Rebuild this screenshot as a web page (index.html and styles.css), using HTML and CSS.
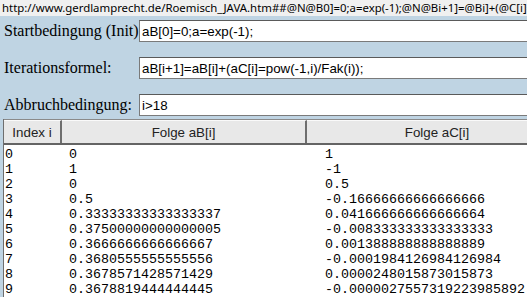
FILE: index.html
```html
<!DOCTYPE html>
<html lang="de">
<head>
    <meta charset="UTF-8">
    <title>Roemisch JAVA</title>
    <link rel="stylesheet" href="styles.css">
</head>
<body>
    <div class="urlbar">http://www.gerdlamprecht.de/Roemisch_JAVA.htm##@N@B0]=0;a=exp(-1);@N@Bi+1]=@Bi]+(@C[i]=pow(-1,i)/Fak(i));@N@Ci]</div>

    <div class="form">
        <div class="row">
            <label class="lbl">Startbedingung (Init)</label>
            <input class="field" type="text" value="aB[0]=0;a=exp(-1);">
        </div>
        <div class="row">
            <label class="lbl">Iterationsformel:</label>
            <input class="field" type="text" value="aB[i+1]=aB[i]+(aC[i]=pow(-1,i)/Fak(i));">
        </div>
        <div class="row">
            <label class="lbl">Abbruchbedingung:</label>
            <input class="field" type="text" value="i&gt;18">
        </div>
    </div>

    <div class="sheet">
        <div class="head">
            <div class="th idx">Index i</div>
            <div class="th col-b">Folge aB[i]</div>
            <div class="th col-c">Folge aC[i]</div>
        </div>
        <pre class="out">0       0                               1
1       1                               -1
2       0                               0.5
3       0.5                             -0.16666666666666666
4       0.33333333333333337             0.041666666666666664
5       0.37500000000000005             -0.008333333333333333
6       0.3666666666666667              0.001388888888888889
7       0.3680555555555556              -0.0001984126984126984
8       0.3678571428571429              0.0000248015873015873
9       0.3678819444444445              -0.0000027557319223985892</pre>
    </div>
</body>
</html>
```

FILE: styles.css
```css
* {
    margin: 0;
    padding: 0;
    box-sizing: border-box;
}

html, body {
    overflow: hidden;
}

body {
    width: 527px;
    height: 297px;
    background: #bfd4e3;
    font-family: "Liberation Serif", serif;
}

.urlbar {
    height: 16px;
    padding-left: 2px;
    background: #f0f0f0;
    color: #000;
    font-family: "Noto Sans", sans-serif;
    font-size: 11.4px;
    line-height: 15px;
    white-space: nowrap;
    overflow: hidden;
}

.form {
    display: flex;
    flex-direction: column;
    gap: 15px;
    padding: 4px 0 0 4px;
    overflow: hidden;
}

.row {
    display: flex;
    align-items: center;
    height: 22px;
}

.lbl {
    width: 135px;
    flex-shrink: 0;
    font-size: 16px;
    color: #000;
    white-space: nowrap;
}

.field {
    width: 420px;
    height: 22px;
    flex-shrink: 0;
    padding: 0 2px;
    border: 1px solid #7a7a7a;
    border-top-color: #5a5a5a;
    background: #fff;
    font-family: "Liberation Sans", sans-serif;
    font-size: 13.33px;
    color: #000;
    outline: none;
}

.sheet {
    margin: 3px 0 0 3px;
    width: 524px;
    background: #fff;
    border-left: 1px solid #6e6e6e;
    overflow: hidden;
}

.head {
    display: flex;
    height: 26px;
    border-top: 1px solid #8a8a8a;
    border-bottom: 2px solid #646464;
    background: #e8e8e8;
}

.th {
    display: flex;
    flex-shrink: 0;
    align-items: center;
    justify-content: center;
    font-family: "Liberation Sans", sans-serif;
    font-size: 13.33px;
    color: #222;
    border-right: 2px solid #6e6e6e;
    border-top: 1px solid #fafafa;
}

.idx {
    width: 58px;
}

.col-b {
    width: 245px;
}

.col-c {
    width: 262px;
}

.out {
    height: 152px;
    padding: 2px 0 0 1px;
    font-family: "Liberation Mono", monospace;
    font-size: 13.33px;
    line-height: 15px;
    color: #000;
    overflow: hidden;
}
```
